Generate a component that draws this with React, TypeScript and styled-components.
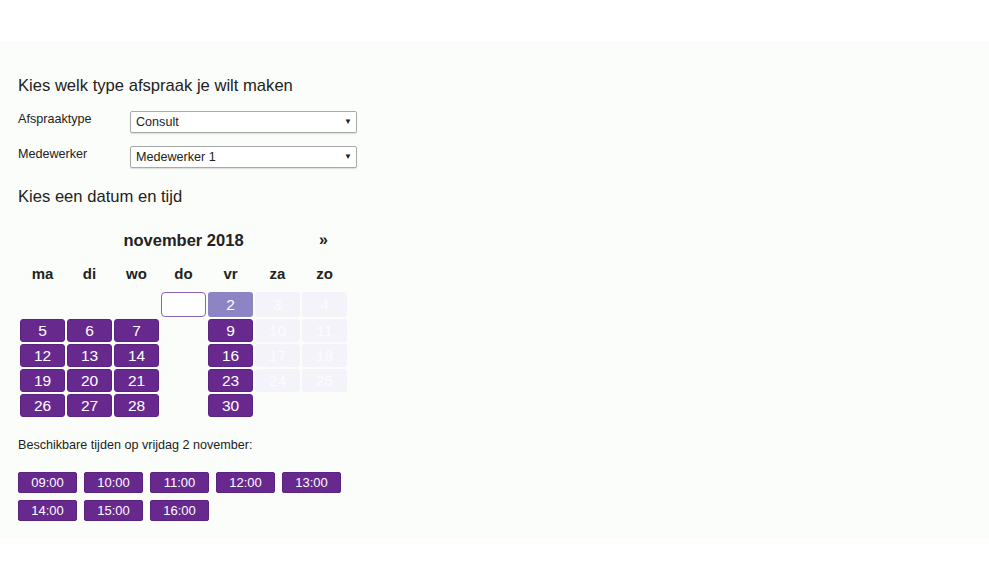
import { createGlobalStyle } from "styled-components";
import styled from "styled-components";

const GlobalStyle = createGlobalStyle`
  html, body {
    margin: 0;
    padding: 0;
    background: #ffffff;
    font-family: "Liberation Sans", Arial, sans-serif;
    color: #222;
  }
`;

const PURPLE = "#68298f";

type DayState = "open" | "selected" | "today" | "closed" | "blank";

interface Day {
  label: string;
  state: DayState;
}

const weekDays = ["ma", "di", "wo", "do", "vr", "za", "zo"];

// november 2018, begint op donderdag
const weeks: Day[][] = [
  [
    { label: "", state: "blank" },
    { label: "", state: "blank" },
    { label: "", state: "blank" },
    { label: "", state: "today" },
    { label: "2", state: "selected" },
    { label: "3", state: "closed" },
    { label: "4", state: "closed" },
  ],
  ...[5, 12, 19].map((start) => [
    { label: String(start), state: "open" as DayState },
    { label: String(start + 1), state: "open" as DayState },
    { label: String(start + 2), state: "open" as DayState },
    { label: "", state: "blank" as DayState },
    { label: String(start + 4), state: "open" as DayState },
    { label: String(start + 5), state: "closed" as DayState },
    { label: String(start + 6), state: "closed" as DayState },
  ]),
  [
    { label: "26", state: "open" },
    { label: "27", state: "open" },
    { label: "28", state: "open" },
    { label: "", state: "blank" },
    { label: "30", state: "open" },
    { label: "", state: "blank" },
    { label: "", state: "blank" },
  ],
];

const times = ["09:00", "10:00", "11:00", "12:00", "13:00", "14:00", "15:00", "16:00"];

export default function App() {
  return (
    <>
      <GlobalStyle />
      <Page>
        <Content>
          <Heading>Kies welk type afspraak je wilt maken</Heading>

          <FieldRow>
            <FieldLabel>Afspraaktype</FieldLabel>
            <SelectWrap>
              <Select defaultValue="consult">
                <option value="consult">Consult</option>
              </Select>
              <Arrow>▼</Arrow>
            </SelectWrap>
          </FieldRow>

          <FieldRow>
            <FieldLabel>Medewerker</FieldLabel>
            <SelectWrap>
              <Select defaultValue="m1">
                <option value="m1">Medewerker 1</option>
              </Select>
              <Arrow>▼</Arrow>
            </SelectWrap>
          </FieldRow>

          <Heading $top={19}>Kies een datum en tijd</Heading>

          <Calendar>
            <MonthTitle>november 2018</MonthTitle>
            <NextLink>»</NextLink>
            {weekDays.map((d) => (
              <WeekDay key={d}>{d}</WeekDay>
            ))}
            {weeks.map((week, wi) =>
              week.map((day, di) => (
                <DayCell key={`${wi}-${di}`} $state={day.state}>
                  {day.label}
                </DayCell>
              ))
            )}
          </Calendar>

          <TimesLabel>Beschikbare tijden op vrijdag 2 november:</TimesLabel>

          <TimeGrid>
            {times.map((t) => (
              <TimeButton key={t}>{t}</TimeButton>
            ))}
          </TimeGrid>
        </Content>
      </Page>
    </>
  );
}

const Page = styled.div`
  margin-top: 41px;
  height: 498px;
  background: #fbfdfa;
`;

const Content = styled.div`
  padding: 35px 18px 0 18px;
  display: flex;
  flex-direction: column;
`;

const Heading = styled.h2<{ $top?: number }>`
  margin: ${(p) => p.$top ?? 0}px 0 0 0;
  font-size: 16.6px;
  font-weight: normal;
  line-height: 20px;
  color: #222;
`;

const FieldRow = styled.div`
  display: flex;
  align-items: flex-start;
  margin-top: 13px;

  & + & {
    margin-top: 11px;
  }
`;

const FieldLabel = styled.label`
  width: 112px;
  margin-top: 2px;
  font-size: 12.6px;
  line-height: 16px;
`;

const SelectWrap = styled.div`
  position: relative;
  margin-top: 2px;
  width: 227px;
  height: 22px;
`;

const Select = styled.select`
  appearance: none;
  width: 100%;
  height: 100%;
  box-sizing: border-box;
  border: 1px solid #a9a9a9;
  border-radius: 2px;
  background: #ffffff;
  box-shadow: 0 1px 1px rgba(0, 0, 0, 0.12);
  padding: 0 20px 0 5px;
  font-family: "Liberation Sans", Arial, sans-serif;
  font-size: 12.6px;
  color: #222;
  outline: none;
`;

const Arrow = styled.span`
  position: absolute;
  right: 5px;
  top: 6px;
  font-size: 8px;
  line-height: 10px;
  color: #222;
  pointer-events: none;
`;

const Calendar = styled.div`
  display: grid;
  grid-template-columns: repeat(7, 45px);
  grid-template-rows: 32px 28px 25px repeat(4, 23px);
  column-gap: 2px;
  row-gap: 2px;
  margin-top: 21px;
  margin-left: 2px;
`;

const MonthTitle = styled.div`
  grid-column: 2 / 7;
  text-align: center;
  font-size: 16.5px;
  font-weight: bold;
  line-height: 24px;
`;

const NextLink = styled.div`
  grid-column: 7 / 8;
  text-align: center;
  font-size: 16px;
  font-weight: bold;
  line-height: 24px;
  padding-right: 2px;
`;

const WeekDay = styled.div`
  text-align: center;
  font-size: 15px;
  font-weight: bold;
  line-height: 24px;
`;

const dayBg: Record<DayState, string> = {
  open: PURPLE,
  selected: "#8c84c4",
  today: "#ffffff",
  closed: "#f5f3fa",
  blank: "transparent",
};

const DayCell = styled.div<{ $state: DayState }>`
  box-sizing: border-box;
  display: flex;
  align-items: center;
  justify-content: center;
  font-size: 15.5px;
  color: ${(p) => (p.$state === "closed" ? "#fcfbff" : "#ffffff")};
  background: ${(p) => dayBg[p.$state]};
  border: 1px solid
    ${(p) =>
      p.$state === "today"
        ? "#8a62b6"
        : p.$state === "open"
        ? "#5a2380"
        : "transparent"};
  border-radius: ${(p) => (p.$state === "today" ? "4px" : "3px")};
`;

const TimesLabel = styled.div`
  margin-top: 20px;
  font-size: 12.6px;
  line-height: 16px;
`;

const TimeGrid = styled.div`
  display: grid;
  grid-template-columns: repeat(5, 59px);
  grid-auto-rows: 21px;
  column-gap: 7px;
  row-gap: 7px;
  margin-top: 19px;
`;

const TimeButton = styled.button`
  box-sizing: border-box;
  padding: 0;
  border: 1px solid #5a2380;
  border-radius: 2px;
  background: ${PURPLE};
  color: #ffffff;
  font-family: "Liberation Sans", Arial, sans-serif;
  font-size: 13px;
  cursor: pointer;
`;
